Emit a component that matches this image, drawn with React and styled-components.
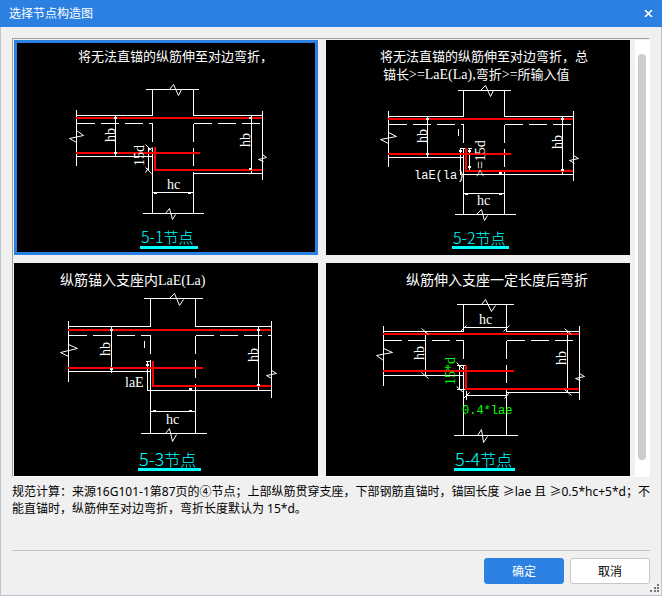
import React, { useState } from 'react';
import styled, { createGlobalStyle } from 'styled-components';

const GlobalStyle = createGlobalStyle`
  * {
    box-sizing: border-box;
  }

  body {
    margin: 0;
    background: #f0f0f0;
    font-family: 'Noto Sans', 'Noto Sans CJK SC', sans-serif;
    font-size: 12px;
    color: #000000;
  }

  button {
    font: inherit;
  }
`;

const Dialog = styled.div`
  position: relative;
  display: flex;
  flex-direction: column;
  height: 100vh;
`;

const TitleBar = styled.header`
  display: flex;
  align-items: center;
  justify-content: space-between;
  height: 27px;
  padding: 0 9px;
  background: #2b80e2;
  color: #ffffff;
`;

const Title = styled.h1`
  margin: 0;
  font-size: 12px;
  font-weight: 400;
  line-height: 18px;
`;

const CloseButton = styled.button`
  display: flex;
  padding: 0;
  border: 0;
  background: none;
  color: inherit;
`;

const Body = styled.main`
  display: flex;
  flex: 1;
  flex-direction: column;
  min-height: 0;
  padding: 11px;
  border: 1px solid #bcc5d3;
  border-top: 0;
`;

const Viewer = styled.div`
  display: flex;
  flex: 1;
  min-height: 0;
  padding: 1px 0 0 1px;
  border: 1px solid;
  border-color: #a0a0a0 #ffffff #ffffff #a0a0a0;
`;

const CardGrid = styled.div`
  display: grid;
  flex: 1;
  grid-template-columns: 1fr 1fr;
  gap: 8px;
  align-content: start;
  margin-right: 5px;
  overflow-y: auto;
  scrollbar-width: none;
`;

const Card = styled.button`
  display: block;
  padding: 0;
  border: 0;
  background: #000000;
  outline: ${({ $selected }) => ($selected ? '3px solid #2b80e2' : 'none')};
  outline-offset: -3px;
`;

const Drawing = styled.svg`
  display: block;
  width: 100%;
  height: 215px;
  fill: none;
  stroke-width: 1;

  text {
    fill: #ffffff;
    font-family: 'Liberation Serif', 'Noto Sans CJK SC', serif;
    font-size: 14px;
    stroke: none;
  }
`;

const Heading = styled.text`
  && {
    font-size: ${({ $size }) => $size}px;
    font-weight: 400;
  }
`;

const Latin = styled.tspan`
  font-size: 14px;
`;

const DimText = styled.text`
  && {
    fill: ${({ $green }) => ($green ? '#00ff00' : '#ffffff')};
    font-family: ${({ $mono }) => ($mono ? "'Liberation Mono', monospace" : "'Liberation Serif', serif")};
    font-size: ${({ $mono }) => ($mono ? 12 : 14)}px;
  }
`;

const NodeName = styled.text`
  && {
    fill: #00ffff;
    font-family: 'Noto Sans CJK SC', sans-serif;
    font-size: ${({ $large }) => ($large ? 18 : 16)}px;
    font-weight: 300;
  }
`;

const NodeWord = styled.tspan`
  font-size: ${({ $large }) => ($large ? 16 : 15)}px;
`;

const ScrollTrack = styled.div`
  display: flex;
  padding: 14px 3px 16px;
  background: #ffffff;
`;

const ScrollThumb = styled.div`
  width: 8px;
  border-radius: 4px;
  background: #cdcdcd;
`;

const Note = styled.p`
  margin: 6px 0 0;
  min-height: 67px;
  line-height: 17px;
`;

const Actions = styled.footer`
  display: flex;
  justify-content: flex-end;
  gap: 6px;
  padding-top: 7px;
  border-top: 1px solid #c3c3c3;
`;

const ActionButton = styled.button`
  width: 80px;
  height: 26px;
  padding: 0;
  border: 1px solid ${({ $primary }) => ($primary ? '#2b80e2' : '#c8c8c8')};
  border-radius: 3px;
  background: ${({ $primary }) => ($primary ? '#2b80e2' : '#ffffff')};
  color: ${({ $primary }) => ($primary ? '#ffffff' : '#000000')};
`;

const Grip = styled.svg`
  position: absolute;
  right: 3px;
  bottom: 3px;
  fill: #777777;
`;

// all lengths are in drawing units, lines sit on pixel centres
const nodes = [
  {
    id: '5-1',
    headingSize: 13,
    heading: [{ x: 64, y: 21, parts: ['将无法直锚的纵筋伸至对边弯折，'] }],
    lines: `M131 49H184 M138 49V75H62 M179 49V75H248 M62 69V125 M248 70V139
      M62 116H138 M138 107V173 M179 131V173 M179 133H248 M128 173H189
      M101 75V116 M237 75V133 M134 107V130 M138 152H179`,
    dashes: ['M62 83H138', 'M179 83H248', 'M138 83V101', 'M179 83V126'],
    breaks: `M155 49L159 44L164 55L167 49 M151 173L155 168L158 179L161 174
      M62 90L69 95L55 98L62 102 M248 114L252 117L244 119L249 121
      M131 104L137 110 M131 127L137 133 M134 110L138 107 M134 127L131 132`,
    dots: [[101, 78], [101, 113], [236, 78], [236, 129], [141, 153], [175, 153]],
    bars: 'M62 78H248 M62 113H186 M141 107V130 M140 130H248',
    dims: [
      { text: 'hb', x: 101, y: 102, up: true },
      { text: 'hb', x: 236, y: 107, up: true },
      { text: '15d', x: 130, y: 126, up: true },
      { text: 'hc', x: 153, y: 149 },
    ],
    name: { x: 127, y: 203 },
    underline: [126, 206, 58],
  },
  {
    id: '5-2',
    headingSize: 13,
    heading: [
      { x: 54, y: 21, parts: ['将无法直锚的纵筋伸至对边弯折，总'] },
      { x: 57, y: 39, parts: ['锚长', '>=LaE(La),', '弯折', '>=', '所输入值'] },
    ],
    lines: `M131 50H184 M137 50V76H62 M178 50V76H247 M62 70V126 M247 70V140
      M62 117H137 M137 107V174 M178 131V174 M135 134H247 M128 174H189
      M101 76V117 M236 76V134 M134 108V134 M143 108V131 M137 153H178
      M132 88V95 M133 108H138 M141 108H145`,
    dashes: ['M62 84H137', 'M178 84H247', 'M137 84V102', 'M178 84V126'],
    breaks: `M154 50L159 45L164 56L167 50 M150 174L155 169L158 180L161 175
      M62 92L70 96L54 99L62 103 M247 115L252 118L243 120L248 123`,
    dots: [[101, 79], [101, 114], [236, 79], [236, 130], [134, 111], [143, 111], [143, 127], [140, 154], [174, 154], [174, 133]],
    bars: 'M62 79H247 M62 114H185 M140 108V131 M139 131H247',
    dims: [
      { text: 'hb', x: 101, y: 103, up: true },
      { text: 'hb', x: 236, y: 109, up: true },
      { text: '>=15d', x: 159, y: 137, up: true },
      { text: 'laE(la)', x: 88, y: 139, mono: true },
      { text: 'hc', x: 151, y: 165 },
    ],
    name: { x: 127, y: 204 },
    underline: [126, 206, 57],
  },
  {
    id: '5-3',
    headingSize: 14,
    heading: [{ x: 46, y: 22, parts: ['纵筋锚入支座内', 'LaE(La)'] }],
    lines: `M129 35H188 M136 35V63H54 M181 35V63H257 M54 57V118 M257 57V134
      M54 108H136 M136 96V170 M181 120V170 M133 127H257 M126 170H192
      M97 63V109 M244 63V127 M133 98V127 M136 148H181 M130 77V84 M131 98H136`,
    dashes: ['M54 72H136', 'M181 72H257', 'M136 72V90', 'M181 72V115'],
    breaks: `M155 35L160 30L165 42L169 36 M151 170L155 165L158 178L162 171
      M54 81L63 85L46 89L54 93 M257 107L262 110L252 112L257 115`,
    dots: [[97, 67], [97, 106], [244, 67], [244, 122], [133, 102], [140, 148], [176, 148], [176, 126]],
    bars: 'M54 67H257 M54 105H189 M139 98V123 M138 123H257',
    dims: [
      { text: 'hb', x: 96, y: 93, up: true },
      { text: 'hb', x: 244, y: 99, up: true },
      { text: 'laE', x: 111, y: 124 },
      { text: 'hc', x: 152, y: 161 },
    ],
    name: { x: 125, y: 203, large: true },
    underline: [124, 205, 63],
  },
  {
    id: '5-4',
    headingSize: 14,
    heading: [{ x: 80, y: 22, parts: ['纵筋伸入支座一定长度后弯折'] }],
    lines: `M130 41H187 M137 41V68H57 M180 41V68H253 M57 62V122 M253 62V136
      M57 112H137 M137 101V172 M180 125V172 M180 129H253 M127 172H191
      M99 68V112 M241 68V129 M133 102V126 M140 132H180 M137 64H180
      M130 102H138 M130 126H138 M140 127V136`,
    dashes: ['M57 77H137', 'M180 77H253', 'M137 77V95', 'M180 77V120'],
    breaks: `M155 41L159 36L165 48L169 42 M151 172L155 166L157 179L161 173
      M57 85L66 89L50 92L57 97 M253 110L258 113L249 115L254 117
      M134 68L140 62 M177 68L183 62 M95 65L102 71 M95 109L102 115
      M238 65L245 71 M238 126L245 132 M130 99L137 106 M130 123L137 129
      M137 135L143 129 M178 135L183 129`,
    dots: [],
    bars: 'M57 71H253 M57 108H188 M140 102V126 M139 126H253',
    dims: [
      { text: 'hb', x: 98, y: 97, up: true },
      { text: 'hb', x: 240, y: 102, up: true },
      { text: '15*d', x: 129, y: 122, up: true, green: true },
      { text: '0.4*lae', x: 136, y: 151, mono: true, green: true },
      { text: 'hc', x: 153, y: 61 },
    ],
    name: { x: 129, y: 203, large: true },
    underline: [128, 205, 61],
  },
];

function NodeDrawing({ node }) {
  const { name, underline } = node;

  return (
    <Drawing viewBox="0 0 304 215" role="img" aria-label={`${node.id}节点`}>
      <g transform="translate(0.5 0.5)" stroke="#ffffff">
        <path d={node.lines} shapeRendering="crispEdges" />
        {node.dashes.map((d) => (
          <path key={d} d={d} strokeDasharray="18 6" shapeRendering="crispEdges" />
        ))}
      </g>
      <path d={node.bars} stroke="#ff0000" strokeWidth="2" shapeRendering="crispEdges" />
      <g transform="translate(0.5 0.5)" stroke="#ffffff">
        <path d={node.breaks} />
      </g>
      {node.dots.map(([x, y]) => (
        <rect key={`${x}-${y}`} x={x - 1} y={y - 1} width="3" height="2" fill="#ffffff" />
      ))}
      {node.heading.map((line) => (
        <Heading key={line.y} x={line.x} y={line.y} $size={node.headingSize}>
          {line.parts.map((part, i) => (i % 2 ? <Latin key={i}>{part}</Latin> : part))}
        </Heading>
      ))}
      {node.dims.map((dim) => (
        <DimText
          key={`${dim.text}-${dim.x}`}
          transform={`translate(${dim.x} ${dim.y})${dim.up ? ' rotate(-90)' : ''}`}
          $mono={dim.mono}
          $green={dim.green}
        >
          {dim.text}
        </DimText>
      ))}
      <NodeName x={name.x} y={name.y} $large={name.large}>
        {node.id}
        <NodeWord $large={name.large}>节点</NodeWord>
      </NodeName>
      <rect x={underline[0]} y={underline[1]} width={underline[2]} height="3" fill="#00ffff" />
    </Drawing>
  );
}

function App() {
  const [selected, setSelected] = useState('5-1');

  return (
    <Dialog role="dialog" aria-labelledby="dialog-title">
      <GlobalStyle />
      <TitleBar>
        <Title id="dialog-title">选择节点构造图</Title>
        <CloseButton type="button" aria-label="关闭">
          <svg width="9" height="7" viewBox="0 0 9 7" fill="none" stroke="currentColor" strokeWidth="1.6">
            <path d="M1 0L8 7M8 0L1 7" />
          </svg>
        </CloseButton>
      </TitleBar>
      <Body>
        <Viewer>
          <CardGrid>
            {nodes.map((node) => (
              <Card
                key={node.id}
                type="button"
                aria-pressed={selected === node.id}
                $selected={selected === node.id}
                onClick={() => setSelected(node.id)}
              >
                <NodeDrawing node={node} />
              </Card>
            ))}
          </CardGrid>
          <ScrollTrack>
            <ScrollThumb />
          </ScrollTrack>
        </Viewer>
        <Note>
          规范计算：来源16G101-1第87页的④节点；上部纵筋贯穿支座，下部钢筋直锚时，锚固长度 ≥lae 且 ≥0.5*hc+5*d；不能直锚时，纵筋伸至对边弯折，弯折长度默认为 15*d。
        </Note>
        <Actions>
          <ActionButton type="button" $primary>确定</ActionButton>
          <ActionButton type="button">取消</ActionButton>
        </Actions>
      </Body>
      <Grip width="9" height="9" viewBox="0 0 9 9" aria-hidden="true">
        <path d="M7 0h2v2h-2z M4 3h2v2h-2z M7 3h2v2h-2z M0 6h2v2h-2z M4 6h2v2h-2z M7 6h2v2h-2z" />
      </Grip>
    </Dialog>
  );
}

export default App;
